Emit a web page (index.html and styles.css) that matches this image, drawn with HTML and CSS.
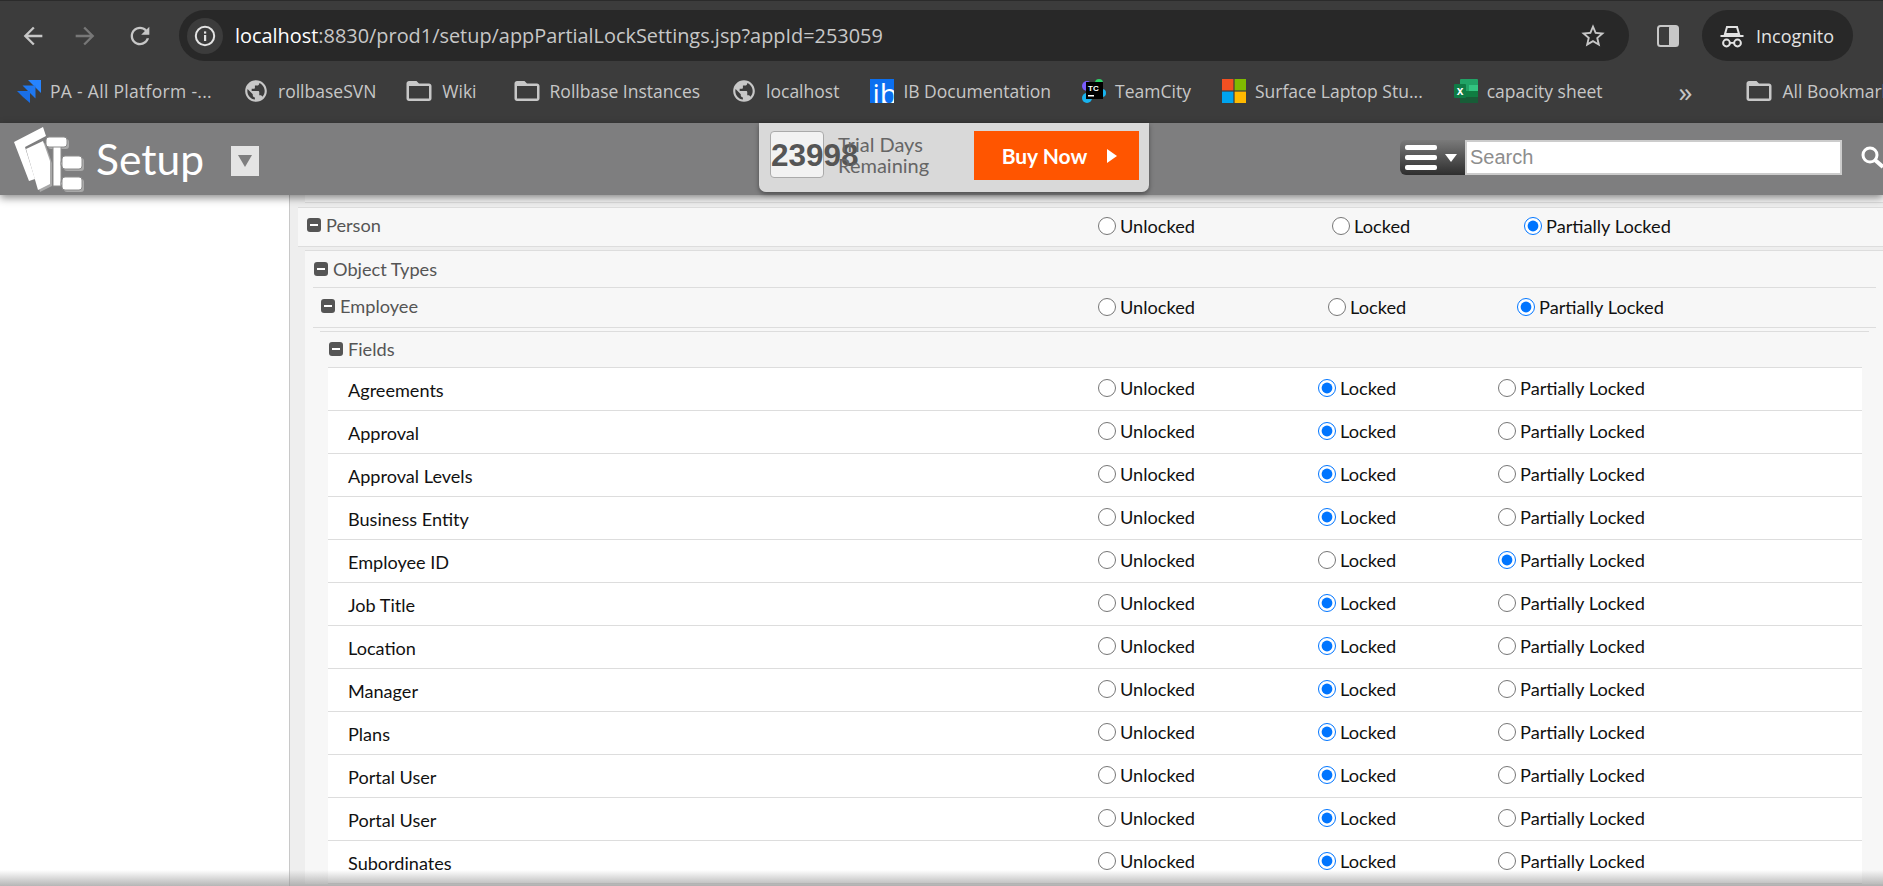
FILE: index.html
```html
<!DOCTYPE html>
<html lang="en">

<head>
    <meta charset="UTF-8">
    <title>Partial Lock Settings</title>
    <link rel="stylesheet" href="styles.css">
</head>

<body>
    <svg class="icon-defs" width="0" height="0">
        <symbol id="i-folder" viewBox="0 0 24 24"><path d="M20 6h-8l-2-2H4c-1.1 0-2 .9-2 2v12c0 1.1.9 2 2 2h16c1.1 0 2-.9 2-2V8c0-1.1-.9-2-2-2zm0 12H4V8h16v10z"/></symbol>
        <symbol id="i-globe" viewBox="0 0 24 24"><path d="M12 2C6.48 2 2 6.48 2 12s4.48 10 10 10 10-4.48 10-10S17.52 2 12 2zm-1 17.93c-3.95-.49-7-3.85-7-7.93 0-.62.08-1.21.21-1.79L9 15v1c0 1.1.9 2 2 2v1.93zm6.9-2.54c-.26-.81-1-1.39-1.9-1.39h-1v-3c0-.55-.45-1-1-1H8v-2h2c.55 0 1-.45 1-1V7h2c1.1 0 2-.9 2-2v-.41c2.93 1.19 5 4.06 5 7.41 0 2.08-.8 3.97-2.1 5.39z"/></symbol>
    </svg>

    <div class="toolbar">
        <svg class="nav-icon" viewBox="0 0 24 24"><path d="M20 11H7.83l5.59-5.59L12 4l-8 8 8 8 1.41-1.41L7.83 13H20v-2z"/></svg>
        <svg class="nav-icon nav-off" viewBox="0 0 24 24"><path d="M4 11h12.17l-5.59-5.59L12 4l8 8-8 8-1.41-1.41L16.17 13H4v-2z"/></svg>
        <svg class="nav-icon nav-reload" viewBox="0 0 24 24"><path d="M17.65 6.35C16.2 4.9 14.21 4 12 4c-4.42 0-7.99 3.58-7.99 8s3.57 8 7.99 8c3.73 0 6.84-2.55 7.73-6h-2.08c-.82 2.33-3.04 4-5.65 4-3.31 0-6-2.69-6-6s2.69-6 6-6c1.66 0 3.14.69 4.22 1.78L13 11h7V4l-2.35 2.35z"/></svg>
        <div class="omnibox">
            <span class="info-chip">
                <svg viewBox="0 0 24 24" width="24" height="24"><circle cx="12" cy="12" r="9.2" fill="none" stroke="#e3e3e3" stroke-width="2"/><rect x="11" y="11" width="2.2" height="6" fill="#e3e3e3"/><rect x="11" y="7.4" width="2.2" height="2.2" fill="#e3e3e3"/></svg>
            </span>
            <span class="url"><span class="url-host">localhost</span>:8830/prod1/setup/appPartialLockSettings.jsp?appId=253059</span>
            <svg class="star" viewBox="0 0 24 24"><path d="M22 9.24l-7.19-.62L12 2 9.19 8.63 2 9.24l5.46 4.73L5.82 21 12 17.27 18.18 21l-1.63-7.03L22 9.24zM12 15.4l-3.76 2.27 1-4.28-3.32-2.88 4.38-.38L12 6.1l1.71 4.04 4.38.38-3.32 2.88 1 4.28L12 15.4z"/></svg>
        </div>
        <svg class="side-panel" viewBox="0 0 22 22"><rect x="1" y="1" width="20" height="20" rx="2.5" fill="none" stroke="#c7c7c7" stroke-width="2"/><rect x="12" y="1" width="9" height="20" rx="1.5" fill="#c7c7c7"/></svg>
        <div class="incognito">
            <svg viewBox="0 0 24 24" width="24" height="26"><path d="M7 3h10l2 7H5z" fill="none" stroke="#e3e3e3" stroke-width="2"/><rect x="0.5" y="11" width="23" height="2" fill="#e3e3e3"/><circle cx="6.5" cy="19" r="3.4" fill="none" stroke="#e3e3e3" stroke-width="2"/><circle cx="17.5" cy="19" r="3.4" fill="none" stroke="#e3e3e3" stroke-width="2"/><rect x="9.8" y="18" width="4.4" height="1.8" fill="#e3e3e3"/></svg>
            <span>Incognito</span>
        </div>
    </div>

    <div class="bookmarks">
        <a class="mark mark-pa">
            <svg class="mark-logo" viewBox="0 0 24 24">
                <polygon points="11,1 24,1 24,14 17,7" fill="#2684ff"/>
                <polygon points="5.500,6.500 18.500,6.500 18.500,19.500 11.500,12.500" fill="#1f78f0"/>
                <polygon points="0,12 13,12 13,24 6,18" fill="#1a6fe6"/>
            </svg>
            PA - All Platform -...
        </a>
        <a class="mark"><svg class="mark-icon globe"><use href="#i-globe"/></svg>rollbaseSVN</a>
        <a class="mark mark-wiki"><svg class="mark-icon"><use href="#i-folder"/></svg>Wiki</a>
        <a class="mark"><svg class="mark-icon"><use href="#i-folder"/></svg>Rollbase Instances</a>
        <a class="mark"><svg class="mark-icon globe"><use href="#i-globe"/></svg>localhost</a>
        <a class="mark"><span class="ib-logo">ib</span>IB Documentation</a>
        <a class="mark">
            <svg class="mark-logo" viewBox="0 0 24 24">
                <circle cx="5" cy="7" r="5" fill="#7a5cff"/>
                <circle cx="17" cy="4" r="4" fill="#2fd06a"/>
                <circle cx="5" cy="19" r="5" fill="#18b4f0"/>
                <circle cx="20" cy="14" r="4" fill="#18b4f0"/>
                <rect x="4" y="3" width="17" height="17" fill="#000"/>
                <text class="tc-text" x="6" y="12">TC</text>
                <rect x="6" y="16" width="6" height="1.500" fill="#fff"/>
            </svg>
            TeamCity
        </a>
        <a class="mark">
            <svg class="mark-logo" viewBox="0 0 24 24">
                <rect width="11.400" height="11.400" fill="#f25022"/>
                <rect x="12.600" width="11.400" height="11.400" fill="#7fba00"/>
                <rect y="12.600" width="11.400" height="11.400" fill="#00a4ef"/>
                <rect x="12.600" y="12.600" width="11.400" height="11.400" fill="#ffb900"/>
            </svg>
            Surface Laptop Stu...
        </a>
        <a class="mark">
            <svg class="mark-logo" viewBox="0 0 24 24">
                <rect x="6" y="0" width="18" height="24" rx="1" fill="#21a366"/>
                <rect x="15" y="6" width="9" height="6" fill="#33c481"/>
                <rect x="6" y="12" width="18" height="6" fill="#107c41"/>
                <rect x="6" y="18" width="18" height="6" fill="#185c37"/>
                <rect x="0" y="5" width="12" height="14" rx="1" fill="#0f7b45"/>
                <text class="xl-text" x="6" y="16">x</text>
            </svg>
            capacity sheet
        </a>
        <span class="more">»</span>
        <span class="mark-divider"></span>
        <a class="mark"><svg class="mark-icon"><use href="#i-folder"/></svg>All Bookmarks</a>
    </div>

    <div class="app-header">
        <div class="brand">
            <svg class="brand-logo" viewBox="0 0 70 66">
                <g fill="#a9a9a9" transform="translate(2 2)">
                    <rect x="32" y="10" width="21" height="10" rx="3"/>
                    <rect x="48" y="29" width="20" height="13" rx="3"/>
                    <rect x="48" y="50" width="20" height="13" rx="3"/>
                    <polygon points="12,22 29,14 36,34 36,57 24,63"/>
                </g>
                <polygon points="0,15 29,0 32,9 11,20 21,52 15,54" fill="#fff"/>
                <polygon points="12,22 29,14 36,34 36,57 24,63" fill="#fff"/>
                <g fill="#fff" stroke="#8c8c8c" stroke-width="1">
                    <rect x="39" y="18" width="8" height="41"/>
                    <rect x="47" y="35" width="4" height="3"/>
                    <rect x="47" y="55" width="4" height="3"/>
                    <rect x="32" y="10" width="21" height="10" rx="3"/>
                    <rect x="48" y="29" width="20" height="13" rx="3"/>
                    <rect x="48" y="50" width="20" height="13" rx="3"/>
                </g>
            </svg>
            <span class="brand-title">Setup</span>
            <span class="brand-menu"><i></i></span>
        </div>
        <div class="trial">
            <span class="trial-count">23998</span>
            <span class="trial-text">Trial Days<br>Remaining</span>
            <a class="buy-now">Buy Now<i></i></a>
        </div>
        <div class="search">
            <span class="search-menu"><span class="bars"><i></i><i></i><i></i></span><b></b></span>
            <input class="search-input" type="text" placeholder="Search">
            <svg class="search-icon" viewBox="0 0 24 24"><circle cx="9" cy="9" r="7" fill="none" stroke="#fff" stroke-width="3"/><path d="M14 14l8 7" stroke="#fff" stroke-width="4"/></svg>
        </div>
    </div>

    <div class="app-body">
        <div class="sidebar"></div>
        <div class="content">
            <div class="stub"></div>

            <div class="row row-app">
                <div class="group-name"><span class="minus"></span>Person</div>
                <label><input type="radio" name="person">Unlocked</label>
                <label><input type="radio" name="person">Locked</label>
                <label><input type="radio" name="person" checked>Partially Locked</label>
            </div>

            <div class="object-types">
                <div class="group-name heading"><span class="minus"></span>Object Types</div>

                <div class="employee">
                    <div class="row row-type">
                        <div class="group-name"><span class="minus"></span>Employee</div>
                        <label><input type="radio" name="employee">Unlocked</label>
                        <label><input type="radio" name="employee">Locked</label>
                        <label><input type="radio" name="employee" checked>Partially Locked</label>
                    </div>

                    <div class="fields">
                        <div class="group-name heading"><span class="minus"></span>Fields</div>

                        <div class="row row-field">
                            <div class="field-name">Agreements</div>
                            <label><input type="radio" name="f1">Unlocked</label>
                            <label><input type="radio" name="f1" checked>Locked</label>
                            <label><input type="radio" name="f1">Partially Locked</label>
                        </div>
                        <div class="row row-field">
                            <div class="field-name">Approval</div>
                            <label><input type="radio" name="f2">Unlocked</label>
                            <label><input type="radio" name="f2" checked>Locked</label>
                            <label><input type="radio" name="f2">Partially Locked</label>
                        </div>
                        <div class="row row-field">
                            <div class="field-name">Approval Levels</div>
                            <label><input type="radio" name="f3">Unlocked</label>
                            <label><input type="radio" name="f3" checked>Locked</label>
                            <label><input type="radio" name="f3">Partially Locked</label>
                        </div>
                        <div class="row row-field">
                            <div class="field-name">Business Entity</div>
                            <label><input type="radio" name="f4">Unlocked</label>
                            <label><input type="radio" name="f4" checked>Locked</label>
                            <label><input type="radio" name="f4">Partially Locked</label>
                        </div>
                        <div class="row row-field">
                            <div class="field-name">Employee ID</div>
                            <label><input type="radio" name="f5">Unlocked</label>
                            <label><input type="radio" name="f5">Locked</label>
                            <label><input type="radio" name="f5" checked>Partially Locked</label>
                        </div>
                        <div class="row row-field">
                            <div class="field-name">Job Title</div>
                            <label><input type="radio" name="f6">Unlocked</label>
                            <label><input type="radio" name="f6" checked>Locked</label>
                            <label><input type="radio" name="f6">Partially Locked</label>
                        </div>
                        <div class="row row-field">
                            <div class="field-name">Location</div>
                            <label><input type="radio" name="f7">Unlocked</label>
                            <label><input type="radio" name="f7" checked>Locked</label>
                            <label><input type="radio" name="f7">Partially Locked</label>
                        </div>
                        <div class="row row-field">
                            <div class="field-name">Manager</div>
                            <label><input type="radio" name="f8">Unlocked</label>
                            <label><input type="radio" name="f8" checked>Locked</label>
                            <label><input type="radio" name="f8">Partially Locked</label>
                        </div>
                        <div class="row row-field">
                            <div class="field-name">Plans</div>
                            <label><input type="radio" name="f9">Unlocked</label>
                            <label><input type="radio" name="f9" checked>Locked</label>
                            <label><input type="radio" name="f9">Partially Locked</label>
                        </div>
                        <div class="row row-field">
                            <div class="field-name">Portal User</div>
                            <label><input type="radio" name="f10">Unlocked</label>
                            <label><input type="radio" name="f10" checked>Locked</label>
                            <label><input type="radio" name="f10">Partially Locked</label>
                        </div>
                        <div class="row row-field">
                            <div class="field-name">Portal User</div>
                            <label><input type="radio" name="f11">Unlocked</label>
                            <label><input type="radio" name="f11" checked>Locked</label>
                            <label><input type="radio" name="f11">Partially Locked</label>
                        </div>
                        <div class="row row-field">
                            <div class="field-name">Subordinates</div>
                            <label><input type="radio" name="f12">Unlocked</label>
                            <label><input type="radio" name="f12" checked>Locked</label>
                            <label><input type="radio" name="f12">Partially Locked</label>
                        </div>
                    </div>
                </div>
            </div>
        </div>
    </div>
    <div class="bottom-fade"></div>
</body>

</html>
```

FILE: styles.css
```css
* {
    box-sizing: border-box;
}

html,
body {
    height: 100%;
}

body {
    margin: 0;
    display: flex;
    flex-direction: column;
    overflow: hidden;
    position: relative;
    background-color: #fff;
    font-family: Lato, "Liberation Sans", sans-serif;
}

.icon-defs {
    position: absolute;
}

/* browser chrome */
.toolbar {
    flex: none;
    height: 61px;
    padding-top: 10px;
    display: flex;
    align-items: flex-start;
    background-color: #3c3c3c;
    border-top: 1px solid #2b2b2b;
}

.nav-icon {
    width: 28px;
    height: 28px;
    margin: 11px 0 0 19px;
    fill: #c7c7c7;
}

.nav-off {
    margin-left: 24px;
    fill: #777;
}

.nav-reload {
    margin-left: 27px;
}

.omnibox {
    width: 1450px;
    height: 51px;
    margin: -1px 0 0 25px;
    padding: 0 22px 0 8px;
    display: flex;
    align-items: center;
    background-color: #282828;
    border-radius: 26px;
}

.info-chip {
    width: 36px;
    height: 36px;
    display: flex;
    align-items: center;
    justify-content: center;
    border-radius: 50%;
    background-color: #3c3c3c;
}

.url {
    margin-left: 12px;
    flex: 1;
    font-family: "Open Sans", sans-serif;
    font-size: 19.9px;
    color: #c7c7c7;
    white-space: nowrap;
}

.url-host {
    color: #fff;
}

.star {
    width: 28px;
    height: 28px;
    fill: #c7c7c7;
}

.side-panel {
    width: 22px;
    height: 22px;
    margin: 14px 0 0 28px;
}

.incognito {
    width: 151px;
    height: 51px;
    margin: -1px 0 0 23px;
    padding-left: 18px;
    display: flex;
    align-items: center;
    gap: 12px;
    background-color: #282828;
    border-radius: 26px;
    font-family: "Open Sans", sans-serif;
    font-size: 18px;
    color: #e3e3e3;
}

.bookmarks {
    flex: none;
    height: 62px;
    padding: 0 0 2px 17px;
    display: flex;
    align-items: center;
    gap: 31px;
    overflow: hidden;
    background-color: #3c3c3c;
    font-family: "Open Sans", sans-serif;
    font-size: 17.5px;
    white-space: nowrap;
    color: #c7c7c7;
}

.mark {
    flex: none;
    display: flex;
    align-items: center;
    gap: 9px;
}

.mark-pa {
    letter-spacing: 0.3px;
}

.mark-wiki {
    margin-right: 7px;
}

.mark-logo {
    width: 24px;
    height: 24px;
}

.mark-icon {
    width: 30px;
    height: 30px;
    margin: 0 -1px 0 -3px;
    fill: #c7c7c7;
}

.globe {
    width: 26px;
    height: 26px;
    margin: 0;
}

.ib-logo {
    width: 24px;
    height: 24px;
    padding-left: 2px;
    overflow: hidden;
    background-color: #0b6ff0;
    color: #fff;
    font-family: "Open Sans", sans-serif;
    font-size: 29px;
    line-height: 29px;
}

.tc-text {
    font-family: "Liberation Sans", sans-serif;
    font-weight: bold;
    font-size: 8px;
    fill: #fff;
}

.xl-text {
    font-family: "Liberation Sans", sans-serif;
    font-weight: bold;
    font-size: 12px;
    fill: #fff;
    text-anchor: middle;
}

.more {
    margin-left: 45px;
    font-size: 28px;
    line-height: 24px;
}

.mark-divider {
    width: 2px;
    height: 24px;
    margin-left: -7px;
    background-color: #5c5c5c;
}

/* app header */
.app-header {
    flex: none;
    height: 72px;
    position: relative;
    z-index: 2;
    display: flex;
    background-color: #7e7e7f;
    box-shadow: 0 3px 8px rgba(0, 0, 0, 0.45);
}

.brand {
    width: 759px;
    flex: none;
    display: flex;
    align-items: flex-start;
}

.brand-logo {
    width: 70px;
    height: 66px;
    margin: 4px 0 0 14px;
}

.brand-title {
    margin: 11px 0 0 12px;
    font-size: 42.5px;
    line-height: 50px;
    color: #fff;
}

.brand-menu {
    width: 28px;
    height: 30px;
    margin: 23px 0 0 27px;
    display: flex;
    align-items: center;
    justify-content: center;
    background-color: #e4e4e4;
}

.brand-menu i {
    border-left: 7px solid transparent;
    border-right: 7px solid transparent;
    border-top: 12px solid #7e7e7f;
}

.trial {
    width: 390px;
    height: 69px;
    flex: none;
    padding: 8px 10px 0 11px;
    display: flex;
    align-items: flex-start;
    background-color: #d9d9d9;
    border-radius: 0 0 7px 7px;
    box-shadow: 0 2px 5px rgba(0, 0, 0, 0.4);
}

.trial-count {
    width: 54px;
    height: 47px;
    flex: none;
    background-color: #f2f2f2;
    border: 1px solid #aaa;
    border-radius: 4px;
    font-family: "Liberation Sans", sans-serif;
    font-size: 31.5px;
    font-weight: bold;
    line-height: 47px;
    color: #555;
    white-space: nowrap;
}

.trial-text {
    margin: 3px 0 0 14px;
    position: relative;
    font-size: 20px;
    line-height: 21px;
    color: #666;
}

.buy-now {
    width: 165px;
    height: 49px;
    margin-left: auto;
    padding-left: 6px;
    display: flex;
    align-items: center;
    justify-content: center;
    gap: 20px;
    background-color: #ff5500;
    color: #fff;
    font-size: 21px;
    font-weight: bold;
}

.buy-now i {
    border-top: 7px solid transparent;
    border-bottom: 7px solid transparent;
    border-left: 10px solid #fff;
}

.search {
    flex: 1;
    min-width: 0;
    padding: 17px 0 0 251px;
    display: flex;
    align-items: flex-start;
}

.search-menu {
    width: 65px;
    height: 35px;
    flex: none;
    padding-left: 5px;
    display: flex;
    align-items: center;
    gap: 8px;
    background: linear-gradient(#7a7a7a, #2e2e2e);
    border-radius: 6px 0 0 6px;
}

.bars {
    width: 32px;
    display: flex;
    flex-direction: column;
    gap: 5px;
}

.bars i {
    height: 5px;
    background-color: #fff;
    border-radius: 2px;
}

.search-menu b {
    border-left: 6px solid transparent;
    border-right: 6px solid transparent;
    border-top: 8px solid #fff;
}

.search-input {
    width: 377px;
    height: 35px;
    flex: none;
    padding: 0 3px;
    background-color: #fff;
    border: 2px solid #ccc;
    border-radius: 0;
    font-family: "Liberation Sans", sans-serif;
    font-size: 20px;
}

.search-input::placeholder {
    color: #8d8d8d;
}

.search-icon {
    width: 24px;
    height: 24px;
    flex: none;
    margin: 6px 0 0 19px;
}

/* body */
.app-body {
    flex: 1;
    display: flex;
    min-height: 0;
}

.sidebar {
    width: 290px;
    flex: none;
    background-color: #fff;
    border-right: 1px solid #c8c8c8;
}

.content {
    flex: 1;
    min-width: 0;
    padding-left: 8px;
    background-color: #eee;
}

.stub {
    height: 8px;
    margin-left: 7px;
    margin-bottom: 4px;
    background-color: #f7f7f7;
    border-bottom: 1px solid #ddd;
}

.row {
    display: grid;
    align-items: center;
    border-bottom: 1px solid #ddd;
}

.row label {
    margin-bottom: 2px;
    display: flex;
    align-items: center;
    gap: 4px;
    font-size: 18.2px;
    color: #111;
}

.row input {
    width: 18px;
    height: 18px;
    margin: 0;
    flex: none;
}

.row .group-name {
    margin-bottom: 3px;
}

.row-app {
    height: 40px;
    padding-left: 9px;
    grid-template-columns: 791px 234px 192px 1fr;
    background-color: #f7f7f7;
    border-top: 1px solid #ddd;
}

.row-app .group-name {
    margin-bottom: 4px;
}

.object-types {
    margin: 3px 0 0 7px;
    background-color: #f7f7f7;
    border-top: 1px solid #ddd;
}

.heading {
    height: 36px;
    padding-left: 9px;
    padding-bottom: 1px;
}

.employee {
    margin: 0 7px 0 8px;
    border-top: 1px solid #ddd;
}

.row-type {
    height: 40px;
    padding-left: 8px;
    grid-template-columns: 777px 230px 189px 1fr;
}

.fields {
    margin: 3px 7px 0 7px;
    border-top: 1px solid #ddd;
}

.fields .heading {
    margin: 0 7px 0 8px;
    padding-left: 1px;
    border-bottom: 1px solid #ddd;
}

.row-field {
    height: 43px;
    margin: 0 7px 0 8px;
    padding-left: 20px;
    grid-template-columns: 750px 220px 180px 1fr;
    background-color: #fff;
}

.group-name {
    display: flex;
    align-items: center;
    gap: 5px;
    font-size: 18.2px;
    color: #555;
}

.minus {
    width: 14px;
    height: 14px;
    flex: none;
    display: flex;
    align-items: center;
    justify-content: center;
    background-color: #555;
    border-radius: 3px;
}

.minus::before {
    content: "";
    width: 8px;
    height: 2px;
    background-color: #fff;
}

.field-name {
    margin-top: 1px;
    font-size: 18.1px;
    color: #111;
}

.bottom-fade {
    position: absolute;
    left: 0;
    right: 0;
    bottom: 0;
    height: 16px;
    background: linear-gradient(rgba(150, 150, 150, 0), rgba(150, 150, 150, 0.7));
}
```
